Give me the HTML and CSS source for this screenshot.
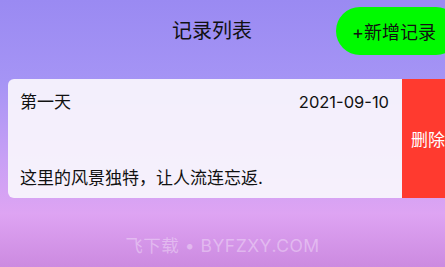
FILE: index.html
```html
<!DOCTYPE html>
<html lang="zh-CN">
<head>
<meta charset="utf-8">
<title>记录列表</title>
<link rel="stylesheet" href="styles.css">
</head>
<body>
<div class="page">
  <header class="header">
    <h1 class="title">记录列表</h1>
    <button class="add-btn">+新增记录</button>
  </header>
  <div class="list">
    <div class="row">
      <div class="card">
        <div class="card-top">
          <span class="card-name">第一天</span>
          <span class="card-date">2021-09-10</span>
        </div>
        <div class="card-body">这里的风景独特，让人流连忘返.</div>
      </div>
      <div class="delete">删除</div>
    </div>
  </div>
  <div class="watermark">飞下载 • BYFZXY.COM</div>
</div>
</body>
</html>
```
FILE: styles.css
```css
html, body {
  margin: 0;
  padding: 0;
}
body {
  width: 445px;
  height: 267px;
  overflow: hidden;
  font-family: Inter, "Noto Sans CJK SC", sans-serif;
  color: #111;
}
.page {
  width: 445px;
  height: 267px;
  overflow: hidden;
  display: flex;
  flex-direction: column;
  background: linear-gradient(180deg, #9a8af2 0%, #a594f5 30%, #c8a0f5 60%, #dea4f3 80%, #cc8ae0 100%);
}
.header {
  display: flex;
  align-items: center;
  padding: 7px 0 0 172px;
  height: 48px;
}
.title {
  margin: 0;
  font-size: 20px;
  font-weight: 400;
  line-height: 24px;
}
.add-btn {
  margin-left: auto;
  margin-right: -15px;
  flex: 0 0 124px;
  height: 48px;
  border: none;
  border-radius: 24px;
  background: #00fa00;
  color: #111;
  font-family: Inter, "Noto Sans CJK SC", sans-serif;
  font-size: 18px;
  text-align: left;
  padding: 0 0 0 16px;
}
.list {
  margin-top: 24px;
  padding-left: 8px;
}
.row {
  display: flex;
  height: 119px;
}
.card {
  flex: 0 0 394px;
  box-sizing: border-box;
  padding: 12px 13px 9px 12px;
  background: rgba(248, 244, 252, 0.94);
  border-radius: 6px 0 0 6px;
  display: flex;
  flex-direction: column;
  justify-content: space-between;
}
.card-top {
  display: flex;
  justify-content: space-between;
  align-items: center;
  font-size: 16px;
  line-height: 22px;
}
.card-name {
  font-size: 17px;
}
.card-date {
  font-size: 16.5px;
}
.card-body {
  font-size: 17px;
  line-height: 22px;
}
.delete {
  flex: 0 0 60px;
  background: #ff3a2f;
  color: #fff;
  font-size: 17px;
  display: flex;
  align-items: center;
  padding-left: 9px;
}
.watermark {
  margin-top: 34px;
  text-align: center;
  font-size: 17.5px;
  color: rgba(255, 255, 255, 0.35);
  letter-spacing: 0.5px;
}
```
